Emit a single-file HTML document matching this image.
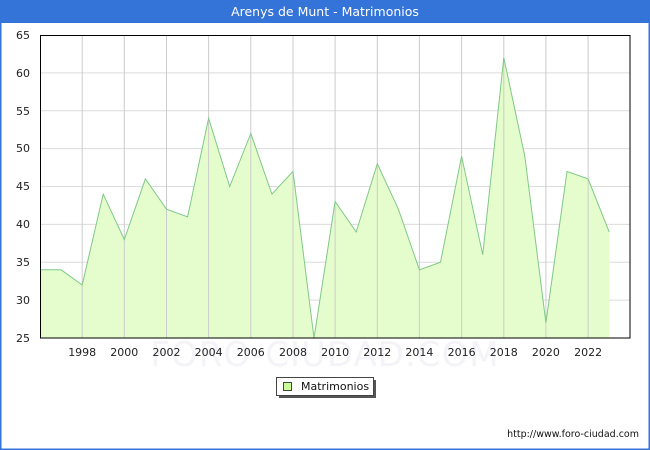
<!DOCTYPE html>
<html><head><style>
html,body{margin:0;padding:0;background:#fff}
body{width:650px;height:450px;position:relative;overflow:hidden;font-family:"DejaVu Sans","Liberation Sans",sans-serif}
</style></head><body>
<svg width="650" height="450" xmlns="http://www.w3.org/2000/svg" style="position:absolute;left:0;top:0">
<rect x="0" y="0" width="650" height="450" fill="#fff"/>
<rect x="0.75" y="0.75" width="648.5" height="448.5" fill="none" stroke="#3473d8" stroke-width="1.5"/>
<rect x="0" y="0" width="650" height="23" fill="#3473d8"/>
<text x="325" y="16" font-size="12.5" fill="#fff" text-anchor="middle" font-family="DejaVu Sans,sans-serif">Arenys de Munt - Matrimonios</text>
<text x="325" y="366" font-size="34" fill="#f3f3f8" text-anchor="middle" font-family="DejaVu Sans,sans-serif" letter-spacing="1">FORO-CIUDAD.COM</text>
<g stroke="#dcdcdc" stroke-width="1">
<line x1="40" y1="300.1" x2="630" y2="300.1"/><line x1="40" y1="262.2" x2="630" y2="262.2"/><line x1="40" y1="224.4" x2="630" y2="224.4"/><line x1="40" y1="186.5" x2="630" y2="186.5"/><line x1="40" y1="148.6" x2="630" y2="148.6"/><line x1="40" y1="110.8" x2="630" y2="110.8"/><line x1="40" y1="72.9" x2="630" y2="72.9"/>
</g>
<polygon fill="#e5fdcc" stroke="none" points="40.5,338 40.5,269.8 61.1,269.8 82.2,285 103.2,194.1 124.3,239.5 145.4,178.9 166.5,209.2 187.6,216.8 208.6,118.3 229.7,186.5 250.8,133.5 271.9,194.1 293,171.4 314,338 335.1,201.6 356.2,231.9 377.3,163.8 398.4,209.2 419.4,269.8 440.5,262.2 461.6,156.2 482.7,254.7 503.8,57.7 524.8,156.2 545.9,322.8 567,171.4 588.1,178.9 609.2,231.9 609.2,338"/>
<g stroke="#cccccc" stroke-width="1">
<line x1="82.2" y1="35" x2="82.2" y2="338"/><line x1="124.3" y1="35" x2="124.3" y2="338"/><line x1="166.5" y1="35" x2="166.5" y2="338"/><line x1="208.6" y1="35" x2="208.6" y2="338"/><line x1="250.8" y1="35" x2="250.8" y2="338"/><line x1="293" y1="35" x2="293" y2="338"/><line x1="335.1" y1="35" x2="335.1" y2="338"/><line x1="377.3" y1="35" x2="377.3" y2="338"/><line x1="419.4" y1="35" x2="419.4" y2="338"/><line x1="461.6" y1="35" x2="461.6" y2="338"/><line x1="503.8" y1="35" x2="503.8" y2="338"/><line x1="545.9" y1="35" x2="545.9" y2="338"/><line x1="588.1" y1="35" x2="588.1" y2="338"/>
</g>
<polyline fill="none" stroke="#80c888" stroke-width="1" points="40.5,269.8 61.1,269.8 82.2,285 103.2,194.1 124.3,239.5 145.4,178.9 166.5,209.2 187.6,216.8 208.6,118.3 229.7,186.5 250.8,133.5 271.9,194.1 293,171.4 314,338 335.1,201.6 356.2,231.9 377.3,163.8 398.4,209.2 419.4,269.8 440.5,262.2 461.6,156.2 482.7,254.7 503.8,57.7 524.8,156.2 545.9,322.8 567,171.4 588.1,178.9 609.2,231.9"/>
<rect x="40.5" y="35.5" width="589.5" height="302.5" fill="none" stroke="#000" stroke-width="1"/>
<g font-size="11" fill="#222" text-anchor="end" font-family="DejaVu Sans,sans-serif">
<text x="30" y="342">25</text><text x="30" y="304">30</text><text x="30" y="266">35</text><text x="30" y="228">40</text><text x="30" y="190">45</text><text x="30" y="152">50</text><text x="30" y="115">55</text><text x="30" y="77">60</text><text x="30" y="39">65</text>
</g>
<g font-size="11" fill="#222" text-anchor="middle" font-family="DejaVu Sans,sans-serif">
<text x="82.2" y="356">1998</text><text x="124.3" y="356">2000</text><text x="166.5" y="356">2002</text><text x="208.6" y="356">2004</text><text x="250.8" y="356">2006</text><text x="293" y="356">2008</text><text x="335.1" y="356">2010</text><text x="377.3" y="356">2012</text><text x="419.4" y="356">2014</text><text x="461.6" y="356">2016</text><text x="503.8" y="356">2018</text><text x="545.9" y="356">2020</text><text x="588.1" y="356">2022</text>
</g>
<rect x="279" y="380" width="97" height="18" fill="#555"/>
<rect x="276.5" y="377.5" width="97" height="18" fill="#fff" stroke="#444" stroke-width="1"/>
<rect x="283.5" y="382.5" width="8" height="8" fill="#ccff99" stroke="#444" stroke-width="1"/>
<text x="301" y="390" font-size="11" fill="#111" font-family="DejaVu Sans,sans-serif">Matrimonios</text>
<text x="639" y="437" font-size="9.5" fill="#111" text-anchor="end" font-family="DejaVu Sans,sans-serif">http://www.foro-ciudad.com</text>
</svg>
</body></html>
